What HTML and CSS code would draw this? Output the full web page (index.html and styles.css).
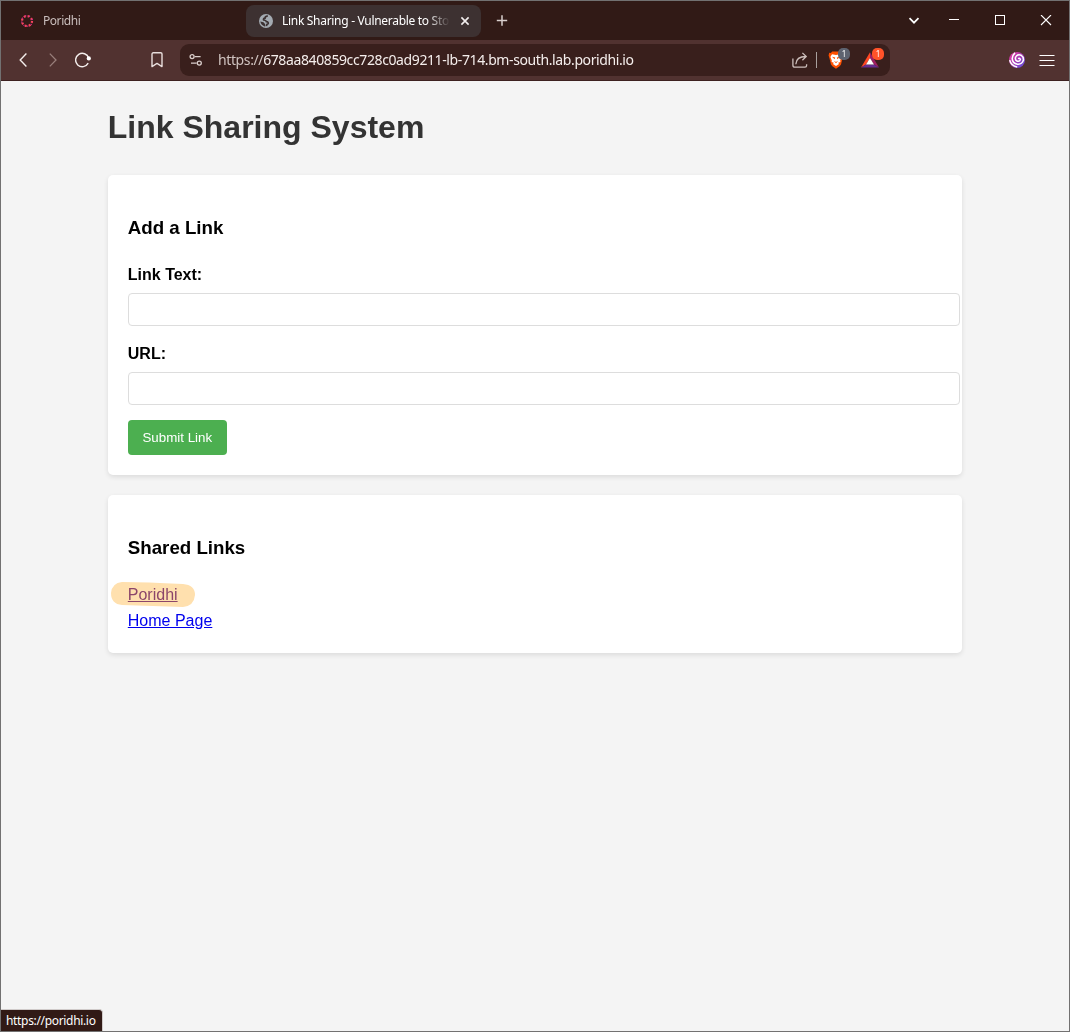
FILE: index.html
```html
<!DOCTYPE html>
<html lang="en">
<head>
<meta charset="utf-8">
<title>Link Sharing - Vulnerable to Stored XSS</title>
<link rel="stylesheet" href="styles.css">
</head>
<body>
<div class="window">
  <header class="tabstrip">
    <div class="tab">
      <svg class="favicon" width="14" height="14" viewBox="0 0 14 14"><circle cx="7" cy="7" r="5" fill="none" stroke="#f5435d" stroke-width="2.2" stroke-dasharray="2 1.927"/><circle cx="7" cy="7" r="5.3" fill="none" stroke="#c72c91" stroke-width="1.4" stroke-dasharray="1 2.927" stroke-dashoffset="1"/></svg>
      <span class="tab-title">Poridhi</span>
    </div>
    <div class="tab active">
      <svg class="favicon" width="14" height="14" viewBox="0 0 14 14"><circle cx="7" cy="7" r="7" fill="#a4abb2"/><path d="M8.8 1.8Q6 2.2 6 4.2Q4 4.6 4.6 6Q7 6.2 7.4 7.6Q9.6 7.8 9.2 9.6Q7.6 10 7.4 12.2" fill="none" stroke="#3c3132" stroke-width="1.7"/><path d="M1.3 7.6L4.5 8.3L6.2 10.2V12.7Q2 11.5 1.3 7.6Z" fill="#3c3132"/></svg>
      <span class="tab-title">Link Sharing - Vulnerable to Stored XSS</span>
      <svg class="close" width="10" height="10" viewBox="0 0 10 10"><path d="M1.4 1.4L8.6 8.6M8.6 1.4L1.4 8.6" stroke="#f2eeee" stroke-width="1.6"/></svg>
    </div>
    <svg class="new-tab" width="12" height="12" viewBox="0 0 12 12"><path d="M6 .3V10.7M.8 5.5H11.2" stroke="#d8cfcd" stroke-width="1.5"/></svg>
    <div class="controls">
      <svg width="12" height="10" viewBox="0 0 12 10"><path d="M1.5 2.2L6 6.7L10.5 2.2" fill="none" stroke="#fff" stroke-width="1.7"/></svg>
      <svg width="12" height="12" viewBox="0 0 12 12"><path d="M1 4.5H11" stroke="#fff"/></svg>
      <svg width="12" height="12" viewBox="0 0 12 12"><rect x="1.5" y=".5" width="9" height="9" fill="none" stroke="#fff"/></svg>
      <svg width="12" height="12" viewBox="0 0 12 12"><path d="M1 0L11 10M11 0L1 10" stroke="#fff" stroke-width="1.1"/></svg>
    </div>
  </header>

  <div class="toolbar">
    <svg class="nav" width="16" height="16" viewBox="0 0 16 16"><path d="M11.4 1.6L5.2 8L11.4 14.4" fill="none" stroke="#f4eeec" stroke-width="1.4"/></svg>
    <svg class="nav" width="16" height="16" viewBox="0 0 16 16"><path d="M4.8 1.6L11 8L4.8 14.4" fill="none" stroke="#997f7b" stroke-width="1.3"/></svg>
    <svg class="nav" width="18" height="16" viewBox="0 0 18 16"><path d="M13.2 11.2A6.7 6.7 0 1 1 13.7 6" fill="none" stroke="#f4eeec" stroke-width="1.4"/><circle cx="13.8" cy="6.4" r="2.1" fill="#fff"/></svg>
    <svg class="bookmark" width="12" height="16" viewBox="0 0 12 16"><path d="M2.3 .8H9.7Q11 .8 11 2.1V14.6L6 11.4L1 14.6V2.1Q1 .8 2.3 .8Z" fill="none" stroke="#e8dedc" stroke-width="1.4" stroke-linejoin="round"/></svg>
    <div class="address">
      <svg class="site-info" width="14" height="14" viewBox="0 0 14 14" fill="none" stroke="#dacecb" stroke-width="1.3"><circle cx="3.1" cy="3.6" r="2"/><path d="M5.8 3.6H11.6M2 10.1H7.6"/><circle cx="10.3" cy="10.1" r="2"/></svg>
      <span class="url"><span class="scheme">https://</span>678aa840859cc728c0ad9211-lb-714.bm-south.lab.poridhi.io</span>
      <svg class="share" width="16" height="16" viewBox="0 0 16 16" fill="none" stroke="#cdbfbc" stroke-width="1.3"><path d="M.9 6.5V13.2Q.9 15.2 2.9 15.2H13Q14.6 15.2 14.6 13.6V12.2"/><path d="M3.8 12.2Q4.3 4.5 13.8 4.5M10.4 .9L14.2 4.5L10.4 8.2"/></svg>
      <span class="divider"></span>
      <span class="extension shields">
        <svg width="16" height="18" viewBox="0 0 16 18"><path d="M4.2 .4H11.8L13.2 2L14.8 1.8L15.4 4.6L14.6 7L13 13.6L11.6 15.3L8 17.8L4.4 15.3L3 13.6L1.4 7L.6 4.6L1.2 1.8L2.8 2Z" fill="#ff5000"/><path d="M4 3.2L8 3.9L12 3.2L13.6 6L12.2 9.4L12.4 11L10.2 11.7L11 13L8 15L5 13L5.8 11.7L3.6 11L3.8 9.4L2.4 6Z" fill="#fff"/><path d="M4 5.8L7.2 6.6L6.6 8.2ZM12 5.8L8.8 6.6L9.4 8.2ZM5.8 9.8L8 10.9L10.2 9.8L8 12.2Z" fill="#ff5000"/></svg>
        <span class="count gray">1</span>
      </span>
      <span class="extension rewards">
        <svg width="18" height="16" viewBox="0 0 18 16"><path d="M9 .3L0 15.6L5 12.5L9 6Z" fill="#ff4724"/><path d="M9 .3L18 15.6L13 12.5L9 6Z" fill="#9e1f63"/><path d="M0 15.6H18L13 12.5H5Z" fill="#662d91"/><path d="M9 6L13 12.5H5Z" fill="#fff"/></svg>
        <span class="count orange">1</span>
      </span>
    </div>
    <svg class="profile" width="16" height="16" viewBox="0 0 16 16"><defs><linearGradient id="swirl" x1="0" y1="0" x2="1" y2="1"><stop offset="0" stop-color="#ef3b9a"/><stop offset=".5" stop-color="#a63bb5"/><stop offset="1" stop-color="#5a55e8"/></linearGradient></defs><circle cx="8" cy="8" r="8" fill="url(#swirl)"/><path d="M9 6.6Q11.2 5.8 11.4 7.6Q10.8 9.8 8.3 9.2Q5.6 8 6.7 5Q8.4 2 12 3.2Q15 5.2 14.3 8.6Q12.7 12.7 8.4 12.2Q3.4 11.2 3.2 6.6Q3.5 3.2 6 .9M.7 8.2Q1.9 13.8 8.2 15" fill="none" stroke="#fff" stroke-width="1.5"/></svg>
    <svg class="menu" width="16" height="13" viewBox="0 0 16 13"><path d="M.5 1.5H15.5M.5 6.5H15.5M.5 11.5H15.5" stroke="#fff" stroke-width="1.2"/></svg>
  </div>

  <main class="page">
    <div class="container">
      <h1>Link Sharing System</h1>
      <section class="card add">
        <h3>Add a Link</h3>
        <form>
          <label for="text">Link Text:</label>
          <input id="text" type="text">
          <label for="url">URL:</label>
          <input id="url" type="text">
          <button type="button">Submit Link</button>
        </form>
      </section>
      <section class="card shared">
        <h3>Shared Links</h3>
        <ul>
          <li><a class="visited" href="#poridhi">Poridhi</a><svg class="marker" width="84" height="27" viewBox="0 0 84 27"><path d="M11 1Q35 1 72 3Q84 4 84 14Q83 25 72 26Q42 25 11 24Q0 23 0 12Q1 2 11 1Z" fill="#ffe0ae"/></svg></li>
          <li><a href="#home">Home Page</a></li>
        </ul>
      </section>
    </div>
  </main>
  <div class="status">https://poridhi.io</div>
</div>
</body>
</html>
```
FILE: styles.css
```css
* { box-sizing: border-box; }
body { margin: 0; font-family: "Liberation Sans", Arial, sans-serif; }
svg { display: block; flex: none; }

.window {
  position: relative;
  display: flex;
  flex-direction: column;
  width: 1070px;
  height: 1032px;
  border: 1px solid #727171;
  background: #f4f4f4;
  overflow: hidden;
}

/* Browser chrome */
.tabstrip, .toolbar, .status { font-family: "Noto Sans", sans-serif; }
.tabstrip {
  display: flex;
  align-items: center;
  height: 39px;
  background: #311a16;
}
.tab {
  display: flex;
  align-items: center;
  width: 245px;
  height: 32px;
  padding-left: 19px;
  color: #cabfbd;
  font-size: 12px;
}
.tab.active {
  width: 235px;
  padding: 0 11px 0 13px;
  border-radius: 8px;
  background: #3d3131;
  color: #fff;
}
.tab-title {
  margin-left: 9px;
  padding-bottom: 1px;
  white-space: nowrap;
  letter-spacing: -.45px;
}
.active .tab-title {
  width: 168px;
  overflow: hidden;
  letter-spacing: -.3px;
  mask-image: linear-gradient(90deg, #000 145px, transparent 168px);
}
.close { margin-left: auto; }
.new-tab { margin-left: 15px; }
.controls {
  display: flex;
  align-items: center;
  margin-left: auto;
  padding-right: 17px;
  gap: 34px;
}
.controls svg:first-child { margin-right: -6px; }

.toolbar {
  display: flex;
  align-items: center;
  flex: none;
  height: 41px;
  padding: 0 14px;
  border-bottom: 1px solid #3d2120;
  background: #513230;
}
.nav + .nav { margin-left: 14px; }
.bookmark { margin-left: 58px; }
.address {
  display: flex;
  align-items: center;
  width: 710px;
  height: 32px;
  margin-left: 17px;
  padding: 0 11px 0 9px;
  border-radius: 9px;
  background: #391f1c;
}
.url {
  margin-left: 15px;
  padding-bottom: 1px;
  color: #f5eeec;
  font-size: 14px;
  letter-spacing: -.39px;
  white-space: nowrap;
}
.scheme { color: #d0c3c0; }
.share { margin-left: auto; }
.divider { width: 1px; height: 16px; margin: 0 11px 0 8px; background: #a9a09e; }
.extension { position: relative; }
.rewards { margin: 0 0 0 17px; }
.count {
  position: absolute;
  top: -3px;
  left: 10px;
  width: 12px;
  height: 12px;
  border-radius: 5px;
  color: #fff;
  font-size: 8px;
  line-height: 12px;
  text-align: center;
}
.gray { background: #5e6370; }
.orange { background: #ff5229; top: -4px; left: 11px; }
.profile { margin-left: auto; }
.menu { margin-left: 14px; }

/* Page */
.page { flex: 1; }
.container { width: 80%; margin: 0 auto; }
h1 { margin: 27px 0 29px; color: #333; font-size: 32px; line-height: 38px; }
h3 { margin: 0; font-size: 18.72px; line-height: 22px; }
.card {
  margin-bottom: 20px;
  padding: 42px 20px 20px;
  border-radius: 5px;
  background: #fff;
  box-shadow: 0 2px 5px rgba(0, 0, 0, .1);
}
.add { height: 300px; }
.shared { height: 158px; }
form { display: flex; flex-direction: column; align-items: flex-start; margin-top: 26px; }
label { margin-bottom: 9px; font-size: 16px; line-height: 19px; font-weight: bold; }
input {
  flex: none;
  width: calc(100% + 18px);
  height: 33px;
  margin: 0 0 18px;
  border: 1px solid #ddd;
  border-radius: 4px;
}
button {
  width: 99px;
  height: 35px;
  margin-top: -3px;
  padding: 0;
  border: 0;
  border-radius: 4px;
  background: #4caf50;
  color: #fff;
  font: 13.333px "Liberation Sans", Arial, sans-serif;
}
ul { margin: 26px 0 0; padding: 0; list-style: none; }
li { position: relative; height: 26px; line-height: 20px; }
a { color: #00e; }
.visited { color: #8c509b; }
.marker { position: absolute; top: -4px; left: -17px; mix-blend-mode: multiply; }
.status {
  position: absolute;
  bottom: 0;
  left: 0;
  width: 102px;
  height: 22px;
  padding-left: 5px;
  border: solid #d0cbca;
  border-width: 1px 1px 0 0;
  border-radius: 0 4px 0 0;
  background: #311a16;
  color: #fff;
  font-size: 12px;
  line-height: 22px;
  letter-spacing: -.33px;
  white-space: nowrap;
}
```
